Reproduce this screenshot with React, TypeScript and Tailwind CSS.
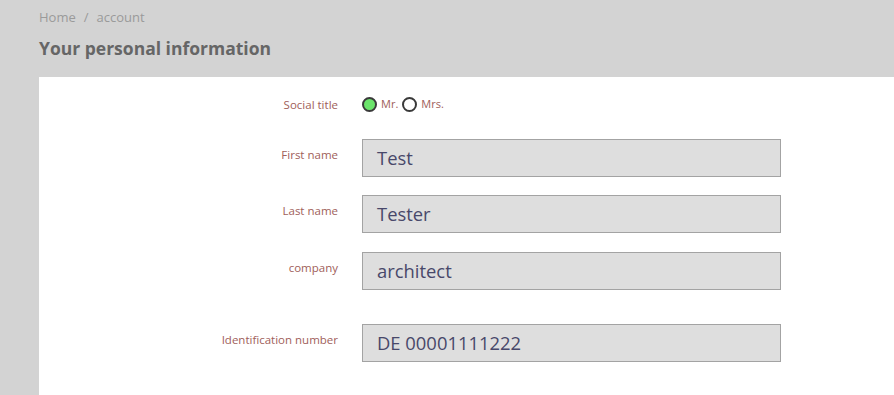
const fields = [
  { label: "First name", value: "Test", gap: "mb-[18px]" },
  { label: "Last name", value: "Tester", gap: "mb-[19px]" },
  { label: "company", value: "architect", gap: "mb-[34px]" },
  { label: "Identification number", value: "DE 00001111222", gap: "" },
];

function Radio({ checked, label }: { checked?: boolean; label: string }) {
  return (
    <label className="flex items-center gap-[4px] cursor-pointer">
      <span
        className={`w-[15px] h-[15px] rounded-full border-2 border-[#3a3a3a] ${
          checked ? "bg-[#6be46b]" : "bg-white"
        }`}
      />
      <span className="text-[11px] text-[#a0605a]">{label}</span>
    </label>
  );
}

export default function App() {
  return (
    <div
      className="w-full h-[395px] overflow-hidden bg-[#d3d3d3] flex flex-col"
      style={{ fontFamily: '"Open Sans", "Liberation Sans", sans-serif' }}
    >
      {/* ── Breadcrumb + title ── */}
      <div className="pl-[39px] pt-[8px]">
        <div className="text-[13px] leading-[18px] text-[#9a9a9a] flex gap-[8px]">
          <span>Home</span>
          <span>/</span>
          <span>account</span>
        </div>
        <h1 className="mt-[10px] text-[17.5px] leading-[24px] font-bold text-[#666666]">
          Your personal information
        </h1>
      </div>

      {/* ── Form card ── */}
      <div className="ml-[39px] mt-[17px] flex-1 bg-white pt-[19px]">
        <div className="flex items-center mb-[26px]">
          <div className="w-[299px] text-right text-[11.5px] text-[#a0605a]">Social title</div>
          <div className="ml-[24px] flex items-center gap-[4px]">
            <Radio checked label="Mr." />
            <Radio label="Mrs." />
          </div>
        </div>

        {fields.map((f) => (
          <div key={f.label} className={`flex items-start ${f.gap}`}>
            <div className="w-[299px] mt-[8px] text-right text-[11.5px] leading-[16px] text-[#a0605a]">
              {f.label}
            </div>
            <div className="ml-[24px] w-[419px] h-[38px] bg-[#dedede] border border-[#a3a3a3] flex items-center pl-[14px] text-[18.4px] text-[#48486a]">
              {f.value}
            </div>
          </div>
        ))}
      </div>
    </div>
  );
}
